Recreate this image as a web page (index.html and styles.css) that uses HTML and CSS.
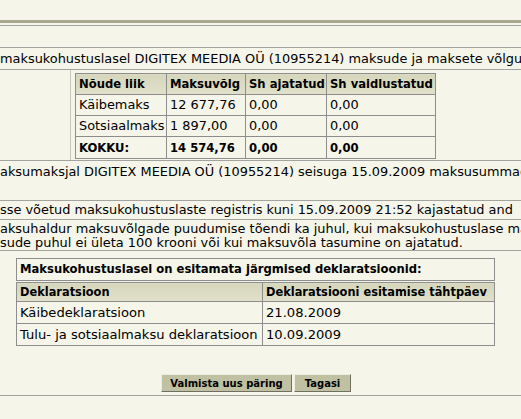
FILE: index.html
```html
<!DOCTYPE html>
<html lang="et">
<head>
<meta charset="utf-8">
<title>Maksuvõlg</title>
<link rel="stylesheet" href="styles.css">
</head>
<body>
<div class="page">
  <div class="top"></div>
  <div class="bar"></div>
  <div class="row r-empty"></div>
  <div class="row r-title">maksukohustuslasel DIGITEX MEEDIA OÜ (10955214) maksude ja maksete võlgu</div>
  <div class="row r-table">
    <div class="t1wrap">
      <table class="t1">
        <colgroup><col class="c1"><col class="c2"><col class="c3"><col class="c4"></colgroup>
        <tr><th>Nõude liik</th><th>Maksuvõlg</th><th>Sh ajatatud</th><th>Sh vaidlustatud</th></tr>
        <tr><td>Käibemaks</td><td>12 677,76</td><td>0,00</td><td>0,00</td></tr>
        <tr><td>Sotsiaalmaks</td><td>1 897,00</td><td>0,00</td><td>0,00</td></tr>
        <tr class="total"><td>KOKKU:</td><td>14 574,76</td><td>0,00</td><td>0,00</td></tr>
      </table>
    </div>
  </div>
  <div class="row r-status"><div class="line">aksumaksjal DIGITEX MEEDIA OÜ (10955214) seisuga 15.09.2009 maksusummad</div></div>
  <div class="row r-note">sse võetud maksukohustuslaste registris kuni 15.09.2009 21:52 kajastatud and</div>
  <div class="row r-para">
    <div class="line">aksuhaldur maksuvõlgade puudumise tõendi ka juhul, kui maksukohustuslase ma</div>
    <div class="line">sude puhul ei ületa 100 krooni või kui maksuvõla tasumine on ajatatud.</div>
  </div>
  <div class="row r-decl">
    <table class="t2">
      <colgroup><col class="d1"><col class="d2"></colgroup>
      <tr><td class="caption" colspan="2">Maksukohustuslasel on esitamata järgmised deklaratsioonid:</td></tr>
      <tr class="head"><th>Deklaratsioon</th><th>Deklaratsiooni esitamise tähtpäev</th></tr>
      <tr><td>Käibedeklaratsioon</td><td>21.08.2009</td></tr>
      <tr><td>Tulu- ja sotsiaalmaksu deklaratsioon</td><td>10.09.2009</td></tr>
    </table>
    <div class="buttons">
      <button class="btn btn-new" type="button">Valmista uus päring</button>
      <button class="btn btn-back" type="button">Tagasi</button>
    </div>
  </div>
  <div class="row r-end"></div>
</div>
</body>
</html>
```

FILE: styles.css
```css
html, body {
  margin: 0;
  padding: 0;
}
body {
  background: #f5f5e9;
  color: #000;
  font-family: "DejaVu Sans", Verdana, sans-serif;
  font-size: 12.9px;
  width: 521px;
  height: 419px;
  overflow: hidden;
}
.page {
  width: 521px;
  overflow: hidden;
}
.top {
  height: 20px;
}
.bar {
  height: 3px;
  background: #a8a890;
  margin-bottom: 2px;
}
.row {
  border-top: 1px solid #a3a39f;
  white-space: nowrap;
  overflow: hidden;
}
.r-empty {
  height: 21px;
}
.r-title {
  height: 21px;
  line-height: 21px;
}
.r-table {
  height: 90px;
}
.t1wrap {
  width: max-content;
  margin-left: 70px;
  border-left: 1px solid #c8c8ba;
  padding: 3px 0 1px 4px;
}
.t1 {
  border-collapse: collapse;
  table-layout: fixed;
  width: 360px;
}
.t1 .c1 { width: 91px; }
.t1 .c2 { width: 79px; }
.t1 .c3 { width: 81px; }
.t1 .c4 { width: 109px; }
.t1 th, .t1 td {
  border: 1px solid #8d8d8d;
  height: 20px;
  padding: 0 0 0 3px;
  text-align: left;
  white-space: nowrap;
  overflow: hidden;
  line-height: 20px;
}
.t1 th {
  font-size: 11.6px;
  font-weight: bold;
  background: linear-gradient(#d6d6bc, #e1e1cb);
}
.t1 .total td {
  font-size: 11.6px;
  font-weight: bold;
  height: 21px;
}
.r-status {
  height: 39px;
}
.r-status .line {
  line-height: 16px;
  padding-top: 3px;
}
.r-note {
  height: 18px;
  line-height: 18px;
}
.r-para {
  height: 31px;
  padding-top: 2px;
  box-sizing: border-box;
}
.r-para .line {
  line-height: 14px;
}
.r-decl {
  height: 145px;
  box-sizing: border-box;
  padding-top: 7px;
}
.t2 {
  margin-left: 16px;
  border-collapse: collapse;
  table-layout: fixed;
  width: 478px;
}
.t2 .d1 { width: 246px; }
.t2 .d2 { width: 232px; }
.t2 th, .t2 td {
  border: 1px solid #8d8d8d;
  padding: 0 0 0 3px;
  text-align: left;
  white-space: nowrap;
  overflow: hidden;
  height: 21px;
  line-height: 21px;
}
.t2 td {
  font-size: 13.1px;
}
.t2 .caption {
  font-size: 11.6px;
  font-weight: bold;
}
.t2 .head th {
  font-size: 11.4px;
  font-weight: bold;
  height: 18px;
  line-height: 18px;
  border-top: 3px double #8d8d8d;
  background: linear-gradient(#d6d6bc, #e1e1cb);
}
.buttons {
  display: flex;
  gap: 2px;
  padding-left: 161px;
  margin-top: 28px;
}
.btn {
  font-family: "DejaVu Sans", Verdana, sans-serif;
  font-size: 10px;
  font-weight: bold;
  color: #000;
  background: #c0c0a2;
  border: 1px solid;
  border-color: #ecece0 #6f6f62 #6f6f62 #ecece0;
  height: 18px;
  padding: 0;
  margin: 0;
}
.btn-new { width: 131px; }
.btn-back { width: 57px; }
.r-end {
  height: 30px;
}
```
